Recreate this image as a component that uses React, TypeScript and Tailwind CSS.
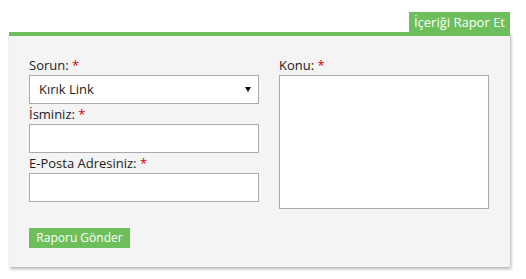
import React from 'react';

function Label({ text, className }: { text: string; className?: string }) {
  return (
    <label className={'block text-[13px] leading-4 text-[#222] ' + (className ?? '')}>
      {text} <span className="text-[#d40000]">*</span>
    </label>
  );
}

export default function App() {
  return (
    <div className="w-[526px] h-[279px] bg-white pt-3 pl-[9px]" style={{ fontFamily: '"Open Sans", sans-serif' }}>
      <div className="w-[501px]">
        <div className="flex justify-end">
          <div className="h-5 px-[5px] bg-[#6cbf5b] text-white text-[13px] leading-5">İçeriği Rapor Et</div>
        </div>
        <div className="border-t-4 border-[#6cbf5b] bg-[#f4f4f4] shadow-[1px_2px_3px_rgba(0,0,0,0.3)] pt-[21px] pb-[19px] pl-5 pr-[21px]">
          <div className="flex gap-5">
            <div className="w-[230px] flex flex-col">
              <Label text="Sorun:" className="mb-[2px]" />
              <div className="relative">
                <select className="w-full h-[29px] appearance-none bg-white border border-[#aaa] pl-[9px] text-[13px] text-[#222] outline-none">
                  <option>Kırık Link</option>
                </select>
                <svg className="absolute right-[8px] top-[12px] pointer-events-none" width="6" height="5" viewBox="0 0 6 5">
                  <path d="M0 0h6L3 5z" fill="#111" />
                </svg>
              </div>
              <Label text="İsminiz:" className="mt-[2px] mb-[2px]" />
              <input className="w-full h-[29px] bg-white border border-[#aaa] outline-none" />
              <Label text="E-Posta Adresiniz:" className="mt-[2px] mb-[2px]" />
              <input className="w-full h-[29px] bg-white border border-[#aaa] outline-none" />
              <div className="mt-[22px]">
                <button className="w-[101px] h-5 bg-[#6cbf5b] text-white text-[12px] leading-5">Raporu Gönder</button>
              </div>
            </div>
            <div className="w-[210px] flex flex-col">
              <Label text="Konu:" className="mb-[2px]" />
              <textarea className="w-full h-[134px] bg-white border border-[#aaa] outline-none resize-none" />
            </div>
          </div>
        </div>
      </div>
    </div>
  );
}
